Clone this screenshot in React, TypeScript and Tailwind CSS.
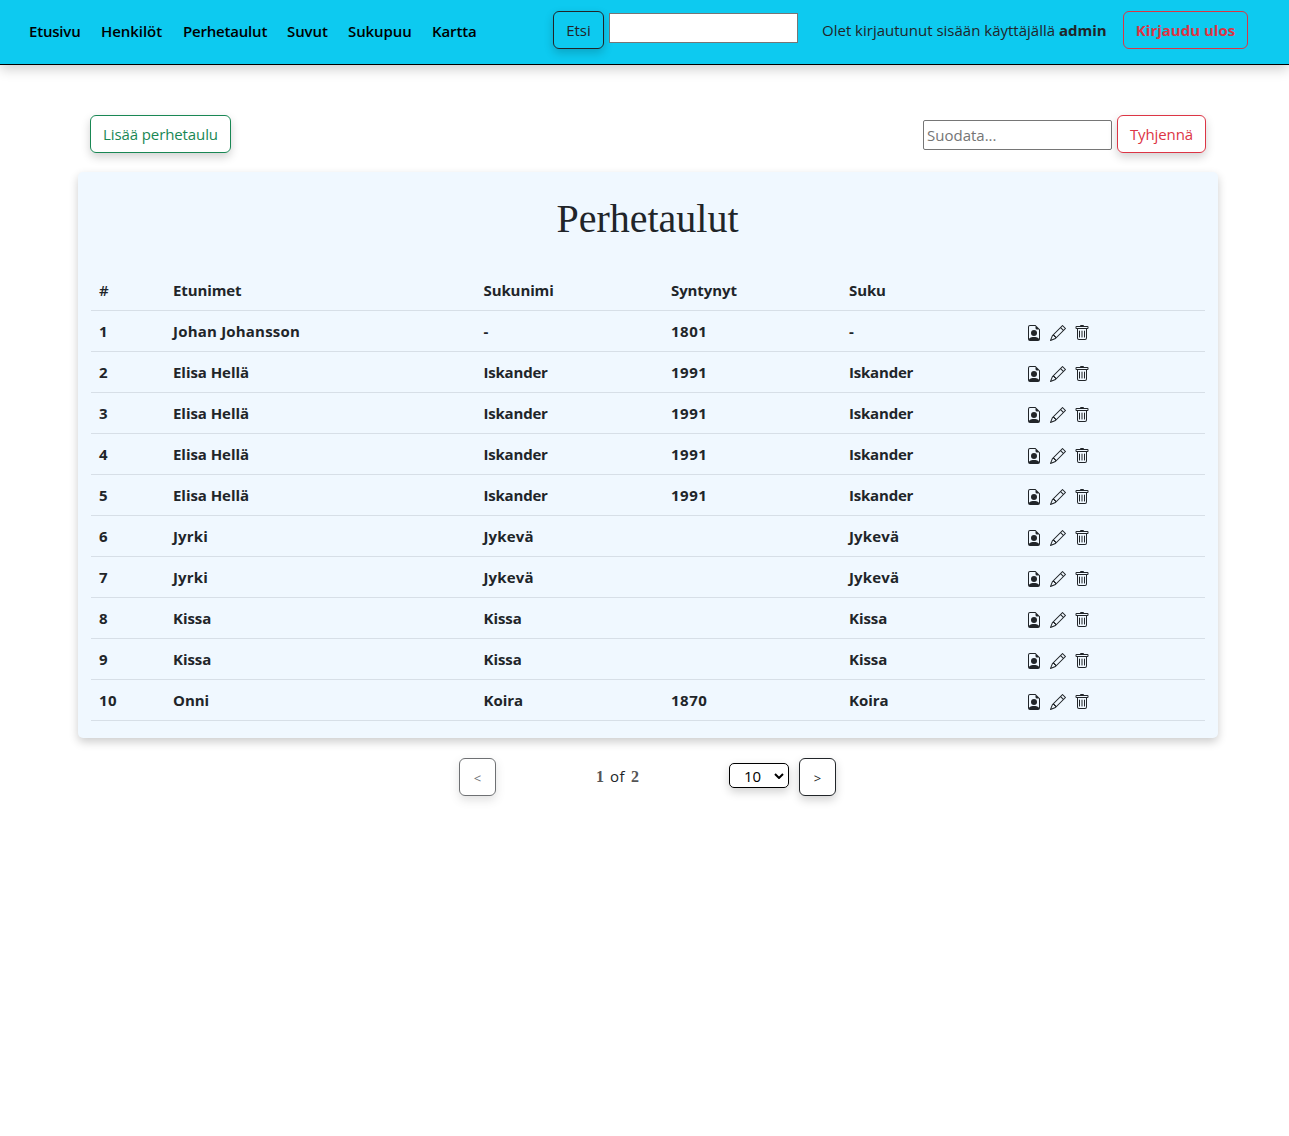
import React from 'react';
import { BsFileEarmarkPerson, BsPencil, BsTrash } from 'react-icons/bs';

const nav: [string, string][] = [
  ['Etusivu', 'w-[52px] tracking-[-0.2px]'],
  ['Henkilöt', 'w-[62px] tracking-[-0.05px]'],
  ['Perhetaulut', 'w-[84px] tracking-[-0.2px]'],
  ['Suvut', 'w-[41px] tracking-[-0.1px]'],
  ['Sukupuu', 'w-[64px] tracking-[-0.1px]'],
  ['Kartta', 'w-[45px] tracking-[-0.1px]'],
];

const rows = [
  ['1', 'Johan Johansson', '-', '1801', '-'],
  ['2', 'Elisa Hellä', 'Iskander', '1991', 'Iskander'],
  ['3', 'Elisa Hellä', 'Iskander', '1991', 'Iskander'],
  ['4', 'Elisa Hellä', 'Iskander', '1991', 'Iskander'],
  ['5', 'Elisa Hellä', 'Iskander', '1991', 'Iskander'],
  ['6', 'Jyrki', 'Jykevä', '', 'Jykevä'],
  ['7', 'Jyrki', 'Jykevä', '', 'Jykevä'],
  ['8', 'Kissa', 'Kissa', '', 'Kissa'],
  ['9', 'Kissa', 'Kissa', '', 'Kissa'],
  ['10', 'Onni', 'Koira', '1870', 'Koira'],
];

const grid =
  'grid h-[41px] grid-cols-[74px_310.5px_187.5px_178px_178px_1fr] items-center border-b border-[#d7dfe7] *:pl-2';

const shadow = 'shadow-[0_4px_10px_rgba(0,0,0,0.18)]';

function tracking(text: string) {
  if (text === 'Johan Johansson') return 'tracking-[0.2px]';
  if (text === 'Iskander') return 'tracking-[-0.2px]';
  if (/^\d+$/.test(text)) return 'tracking-[0.5px]';
  if (text === 'Jyrki' || text === 'Jykevä') return 'tracking-[0.15px]';
  return 'tracking-[-0.05px]';
}

export default function App() {
  return (
    <div className="min-h-[1136px] bg-white font-['Open_Sans',sans-serif] text-base leading-6 text-[#212529]">
      <header className="flex h-[65px] items-start border-b border-black bg-[#0dcaf0] pl-[29px] pt-[11px] whitespace-nowrap shadow-[0_4px_12px_rgba(0,0,0,0.2)]">
        <nav className="flex w-[524px] gap-5 pt-2 text-[15px] font-semibold text-black">
          {nav.map(([label, width]) => (
            <a key={label} className={width}>{label}</a>
          ))}
        </nav>
        <button className={`h-[38px] w-[51px] rounded-md border border-[#212529] text-[15px] ${shadow}`}>Etsi</button>
        <input className="ml-[5px] mt-[2px] h-[30px] w-[189px] border border-[#767676] bg-white" />
        <span className="ml-6 w-[286px] pt-[7px] text-[15px]">
          Olet kirjautunut sisään käyttäjällä <b className="font-bold">admin</b>
        </span>
        <button className="ml-[15px] h-[38px] w-[125px] rounded-md border border-[#dc3545] text-[15px] font-bold text-[#dc3545]">
          Kirjaudu ulos
        </button>
      </header>

      <main className="ml-[78px] w-[1140px] pt-[50px]">
        <div className="flex items-start px-3">
          <button className={`h-[38px] w-[141px] rounded-md border border-[#198754] text-[15px] tracking-[-0.1px] text-[#198754] ${shadow}`}>
            Lisää perhetaulu
          </button>
          <input
            placeholder="Suodata..."
            className="ml-auto mt-[5px] h-[30px] w-[189px] rounded-[2px] border border-[#767676] px-[3px] text-[15px] placeholder:text-[#757575]"
          />
          <button className={`ml-[5px] h-[38px] w-[89px] rounded-md border border-[#dc3545] text-[15px] tracking-[-0.1px] text-[#dc3545] ${shadow}`}>
            Tyhjennä
          </button>
        </div>

        <section className="mt-[19px] h-[566px] rounded-[5px] bg-[#f0f8ff] pl-[13px] pr-[13px] pt-[23px] shadow-[0_4px_10px_rgba(0,0,0,0.2)]">
          <h1 className="h-[75px] pr-px text-center font-['Liberation_Serif',serif] text-[40px] leading-[48px]">Perhetaulut</h1>
          <div className="text-[15px] font-bold">
            <div className={`${grid} tracking-[-0.1px]`}>
              <span className="font-semibold">#</span>
              <span>Etunimet</span>
              <span>Sukunimi</span>
              <span>Syntynyt</span>
              <span>Suku</span>
            </div>
            {rows.map((r) => (
              <div key={r[0]} className={grid}>
                {r.map((c, i) => (
                  <span key={i} className={tracking(c)}>{c}</span>
                ))}
                <span className="-ml-px flex gap-2 pt-[3px]">
                  <BsFileEarmarkPerson size={16} />
                  <BsPencil size={16} />
                  <BsTrash size={16} />
                </span>
              </div>
            ))}
          </div>
        </section>

        <div className="ml-[381px] mt-5 flex w-[377px] items-start">
          <button className={`h-[38px] w-[37px] rounded-md border border-[#212529] pt-[2px] text-[13px] font-normal opacity-65 ${shadow}`}>&lt;</button>
          <div className="ml-[100px] flex w-[133px] gap-[6px] pt-[7px] text-[15px]">
            <b className="font-['Liberation_Serif',serif] text-base text-[#555]">1</b>
            <span className="-mt-px tracking-[0.5px]">of</span>
            <b className="font-['Liberation_Serif',serif] text-base text-[#555]">2</b>
          </div>
          <div className={`mt-[5px] flex h-[25px] w-[60px] items-center rounded-[5px] border border-black pl-[14px] text-[15px] text-black ${shadow}`}>
            10
            <svg className="ml-[13px] h-[6px] w-[10px]" viewBox="0 0 10 6" fill="none" stroke="black" strokeWidth="2">
              <path d="M1 1l4 4 4-4" />
            </svg>
          </div>
          <button className={`ml-[10px] h-[38px] w-[37px] rounded-md border border-[#212529] pt-[2px] text-[13px] font-normal ${shadow}`}>&gt;</button>
        </div>
      </main>
    </div>
  );
}
